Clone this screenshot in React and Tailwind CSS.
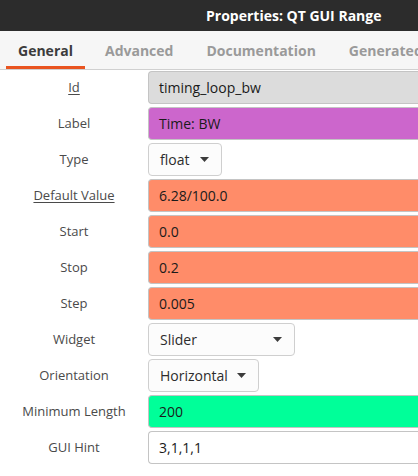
const rows = [
  { label: 'Id', kind: 'text', value: 'timing_loop_bw', bg: 'bg-[#dcdcdc]', underline: true },
  { label: 'Label', kind: 'text', value: 'Time: BW', bg: 'bg-[#cc66cc]' },
  { label: 'Type', kind: 'select', value: 'float', w: 'w-[74px]' },
  { label: 'Default Value', kind: 'text', value: '6.28/100.0', bg: 'bg-[#ff8c69]', underline: true },
  { label: 'Start', kind: 'text', value: '0.0', bg: 'bg-[#ff8c69]' },
  { label: 'Stop', kind: 'text', value: '0.2', bg: 'bg-[#ff8c69]' },
  { label: 'Step', kind: 'text', value: '0.005', bg: 'bg-[#ff8c69]' },
  { label: 'Widget', kind: 'select', value: 'Slider', w: 'w-[147px]' },
  { label: 'Orientation', kind: 'select', value: 'Horizontal', w: 'w-[111px]' },
  { label: 'Minimum Length', kind: 'text', value: '200', bg: 'bg-[#00ff99]' },
  { label: 'GUI Hint', kind: 'text', value: '3,1,1,1', bg: 'bg-white' },
];

const tabs = ['General', 'Advanced', 'Documentation', 'Generated'];

function Caret() {
  return (
    <svg width="9" height="5" viewBox="0 0 9 5" className="shrink-0">
      <path d="M0 0h9L4.5 5z" fill="#3c3c3c" />
    </svg>
  );
}

export default function App() {
  return (
    <div className="w-[418px] h-[476px] overflow-hidden bg-white font-['Open_Sans',sans-serif]">
      <div className="h-[31px] bg-[#2c2c2c] flex items-center pl-[206px]">
        <span className="text-white font-bold text-[14px] whitespace-nowrap">Properties: QT GUI Range</span>
      </div>
      <div className="h-[39px] bg-[#f6f6f6] border-b border-[#d0d0d0] flex pl-[6px] whitespace-nowrap">
        {tabs.map((t, i) => (
          <div
            key={t}
            className={
              'h-full flex items-center px-3 text-[14px] font-bold ' +
              (i === 0 ? 'text-[#3c3c3c] border-b-[3px] border-[#e95420] pt-[3px] w-[80px] justify-center mr-[8px]' : 'text-[#9a9a9a] mr-[9px]')
            }
          >
            {t}
          </div>
        ))}
      </div>
      <div className="flex flex-col gap-[3px] pt-[1px]">
        {rows.map(r => (
          <div key={r.label} className="flex h-[33px]">
            <div className="w-[148px] flex items-center justify-center text-[13px] text-[#4a4a4a]">
              <span className={r.underline ? 'underline underline-offset-2' : ''}>{r.label}</span>
            </div>
            {r.kind === 'text' ? (
              <div className={'flex-1 flex items-center pl-[10px] rounded-l-[4px] border border-r-0 border-[#c4c4c4] text-[14px] text-[#1a1a1a] ' + r.bg}>
                {r.value}
              </div>
            ) : (
              <div className={'flex items-center justify-between pl-[11px] pr-[12px] rounded-[4px] border border-[#cfcfcf] bg-[#fcfcfc] text-[14px] text-[#2c2c2c] ' + r.w}>
                <span>{r.value}</span>
                <Caret />
              </div>
            )}
          </div>
        ))}
      </div>
    </div>
  );
}
